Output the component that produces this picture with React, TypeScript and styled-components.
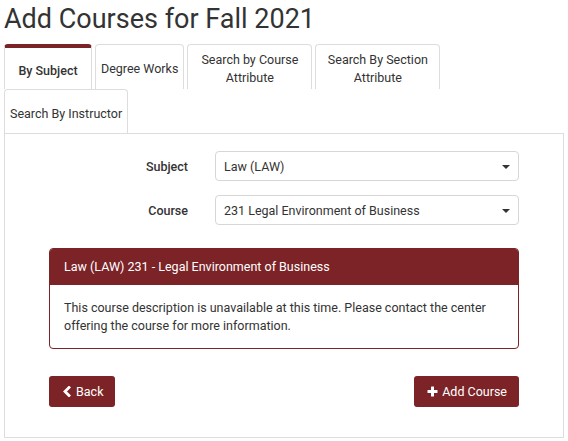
import React from "react";
import styled, { createGlobalStyle } from "styled-components";

const maroon = "#7b2327";

const GlobalStyle = createGlobalStyle`
  html, body {
    margin: 0;
    padding: 0;
    background: #ffffff;
  }

  body {
    font-family: Roboto, "Liberation Sans", Arial, sans-serif;
    font-size: 12.5px;
    color: #333333;
  }

  * {
    box-sizing: border-box;
  }
`;

const Page = styled.div`
  width: 568px;
  padding: 0 4px;
`;

const Title = styled.h1`
  margin: 3px 0 9px;
  font-size: 27px;
  line-height: 32px;
  font-weight: 400;
  color: #333333;
`;

const TabList = styled.div`
  display: flex;
  flex-wrap: wrap;
  align-items: stretch;
`;

const Tab = styled.div<{ $active?: boolean }>`
  display: flex;
  align-items: center;
  justify-content: center;
  min-width: 88px;
  max-width: 125px;
  min-height: 44px;
  margin-right: 3px;
  padding: 6px 5px 2px;
  border: 1px solid #dddddd;
  border-top: ${(p) => (p.$active ? `4px solid ${maroon}` : "1px solid #dddddd")};
  border-bottom: none;
  border-radius: 4px 4px 0 0;
  text-align: center;
  line-height: 18px;
  font-weight: ${(p) => (p.$active ? 500 : 400)};
  color: #333333;
  cursor: pointer;
`;

const Panel = styled.div`
  border: 1px solid #dddddd;
  padding: 17px 44px 30px;
`;

const Form = styled.div`
  display: grid;
  grid-template-columns: 139px 1fr;
  column-gap: 27px;
  row-gap: 14px;
  align-items: center;
`;

const Label = styled.label`
  text-align: right;
  font-weight: 500;
  color: #333333;
`;

const Select = styled.div`
  position: relative;
  display: flex;
  align-items: center;
  height: 30px;
  padding: 0 8px;
  border: 1px solid #d6d6d6;
  border-radius: 4px;
  color: #333333;

  &::after {
    content: "";
    position: absolute;
    right: 8px;
    top: 13px;
    border-left: 4px solid transparent;
    border-right: 4px solid transparent;
    border-top: 4px solid #333333;
  }
`;

const Card = styled.div`
  margin-top: 23px;
  border: 1px solid ${maroon};
  border-radius: 4px;
  overflow: hidden;
`;

const CardHeader = styled.div`
  background: ${maroon};
  color: #ffffff;
  padding: 9px 14px;
  line-height: 18px;
`;

const CardBody = styled.div`
  padding: 14px 14px 13px;
  line-height: 18px;
`;

const Actions = styled.div`
  display: flex;
  justify-content: space-between;
  margin-top: 27px;
`;

const Button = styled.button`
  display: inline-flex;
  align-items: center;
  gap: 4px;
  height: 31px;
  padding: 0 12px 0 13px;
  border: none;
  border-radius: 3px;
  background: ${maroon};
  color: #ffffff;
  font-family: Roboto, "Liberation Sans", Arial, sans-serif;
  font-size: 12.5px;
  cursor: pointer;
`;

const ChevronLeft = () => (
  <svg width="10" height="11" viewBox="0 0 10 11">
    <polyline
      points="7,1.5 3,5.5 7,9.5"
      fill="none"
      stroke="#ffffff"
      strokeWidth="2.8"
      strokeLinecap="square"
    />
  </svg>
);

const Plus = () => (
  <svg width="11" height="11" viewBox="0 0 11 11">
    <rect x="4" y="0.5" width="3" height="10" fill="#ffffff" rx="0.5" />
    <rect x="0.5" y="4" width="10" height="3" fill="#ffffff" rx="0.5" />
  </svg>
);

const tabs = [
  "By Subject",
  "Degree Works",
  "Search by Course Attribute",
  "Search By Section Attribute",
  "Search By Instructor",
];

const App: React.FC = () => {
  return (
    <Page>
      <GlobalStyle />
      <Title>Add Courses for Fall 2021</Title>
      <TabList>
        {tabs.map((t, i) => (
          <Tab key={t} $active={i === 0}>
            {t}
          </Tab>
        ))}
      </TabList>
      <Panel>
        <Form>
          <Label>Subject</Label>
          <Select>Law (LAW)</Select>
          <Label>Course</Label>
          <Select>231 Legal Environment of Business</Select>
        </Form>
        <Card>
          <CardHeader>Law (LAW) 231 - Legal Environment of Business</CardHeader>
          <CardBody>
            This course description is unavailable at this time. Please contact
            the center offering the course for more information.
          </CardBody>
        </Card>
        <Actions>
          <Button>
            <ChevronLeft />
            Back
          </Button>
          <Button>
            <Plus />
            Add Course
          </Button>
        </Actions>
      </Panel>
    </Page>
  );
};

export default App;
